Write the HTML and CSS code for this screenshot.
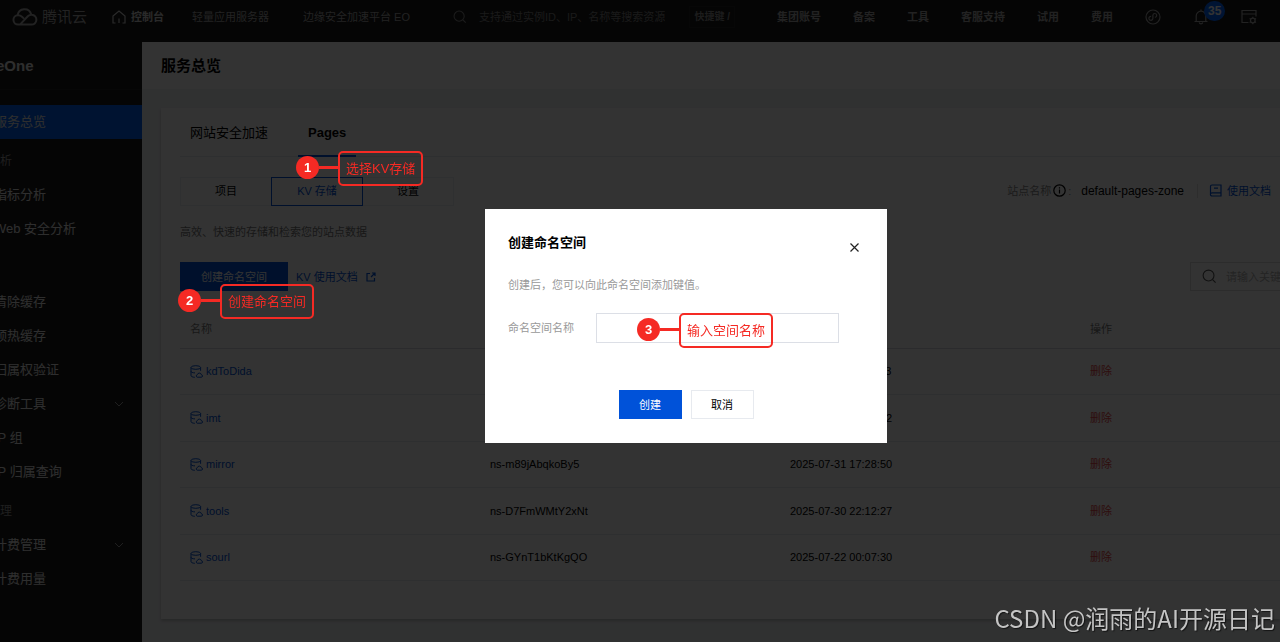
FILE: index.html
```html
<!DOCTYPE html>
<html lang="zh-CN">
<head>
    <meta charset="UTF-8">
    <meta name="viewport" content="width=device-width, initial-scale=1.0">
    <title>服务总览 - 腾讯云</title>
    <link rel="stylesheet" href="styles.css">
</head>
<body>
    <!-- shared icons -->
    <svg class="sprite" aria-hidden="true">
        <symbol id="icon-search" viewBox="0 0 16 16">
            <circle cx="7" cy="7" r="5.8"/>
            <path d="M11.3 11.3L14.5 14.5"/>
        </symbol>
        <symbol id="icon-db" viewBox="0 0 13 13">
            <ellipse cx="5.8" cy="2.5" rx="4.8" ry="1.8"/>
            <path d="M1 2.5v8c0 1 1.6 1.7 3.8 1.8M10.6 2.5v3.3M1 6.4c0 .8 1.6 1.4 4 1.5M7.2 12.2h4a1.2 1.2 0 0 0 .2-2.4 2.1 2.1 0 0 0-4.1-.1 1.3 1.3 0 0 0-.1 2.5z"/>
        </symbol>
        <symbol id="icon-arrow" viewBox="0 0 10 10">
            <path d="M1 3l4 4 4-4"/>
        </symbol>
    </svg>

    <header class="topbar">
        <a href="#" class="logo">
            <svg width="26" height="20" viewBox="0 0 26 20">
                <path d="M8 17.6h11.2a4.9 4.9 0 0 0 .6-9.8c-1.6-.1-2.9.5-4 1.5L8 17.6H6.4a4.7 4.7 0 0 1-.5-9.4c1.7-.1 3 .5 4.1 1.5l2 1.9M5.6 8.2a7 7 0 0 1 13.6-1"/>
            </svg>
            <span>腾讯云</span>
        </a>
        <a href="#" class="home">
            <svg width="14" height="14" viewBox="0 0 14 14"><path d="M3.5 13H1V6l6-5 6 5v7h-2.500M7 13V8.500"/></svg>
            控制台
        </a>
        <nav class="shortcuts">
            <a href="#">轻量应用服务器</a>
            <a href="#">边缘安全加速平台 EO</a>
        </nav>
        <div class="top-search">
            <svg width="14" height="14"><use href="#icon-search"/></svg>
            <input type="text" aria-label="搜索" placeholder="支持通过实例ID、IP、名称等搜索资源">
            <kbd>快捷键 /</kbd>
        </div>
        <nav class="top-links">
            <a href="#">集团账号</a>
            <a href="#">备案</a>
            <a href="#">工具</a>
            <a href="#">客服支持</a>
            <a href="#">试用</a>
            <a href="#">费用</a>
        </nav>
        <div class="top-icons">
            <button type="button" aria-label="小程序">
                <svg width="16" height="16" viewBox="0 0 16 16"><circle cx="8" cy="8" r="7"/><path d="M6.2 7.300a2 2 0 1 0 1.700 2V6.300a1.900 1.900 0 1 1 2 2"/></svg>
            </button>
            <button type="button" aria-label="消息" class="bell">
                <svg width="16" height="16" viewBox="0 0 16 16"><path d="M1.500 12.500h13M3.200 12.500V7a4.800 4.800 0 0 1 9.600 0v5.500M8 2.200V.6M6.200 13.500a1.900 1.900 0 0 0 3.600 0"/></svg>
                <span class="badge">35</span>
            </button>
            <button type="button" aria-label="设置">
                <svg width="16" height="16" viewBox="0 0 16 16"><path d="M7.500 13.500H1v-12h14v6M1 5h14"/><circle cx="11.800" cy="11.500" r="2.300"/><path d="M11.800 7.800v1.400M11.800 13.800v1.400M8.600 9.600l1.200.7M13.800 12.700l1.200.7M8.600 13.400l1.200-.7M13.800 10.300l1.200-.7"/></svg>
            </button>
        </div>
    </header>

    <div class="layout">
        <aside class="sidebar">
            <h2>eOne</h2>
            <ul>
                <li><a href="#" class="active">服务总览</a></li>
                <li class="group">分析</li>
                <li><a href="#">指标分析</a></li>
                <li><a href="#">Web 安全分析</a></li>
                <li class="group"></li>
                <li><a href="#">清除缓存</a></li>
                <li><a href="#">预热缓存</a></li>
                <li><a href="#">归属权验证</a></li>
                <li><a href="#">诊断工具<svg width="10" height="10"><use href="#icon-arrow"/></svg></a></li>
                <li><a href="#">IP 组</a></li>
                <li><a href="#">IP 归属查询</a></li>
                <li class="group">管理</li>
                <li><a href="#">计费管理<svg width="10" height="10"><use href="#icon-arrow"/></svg></a></li>
                <li><a href="#">计费用量</a></li>
            </ul>
        </aside>

        <main>
            <div class="page-title"><h1>服务总览</h1></div>
            <section class="card">
                <nav class="tabs">
                    <a href="#">网站安全加速</a>
                    <a href="#" class="active">Pages</a>
                </nav>

                <div class="row">
                    <div class="segment">
                        <button type="button">项目</button>
                        <button type="button" class="active">KV 存储</button>
                        <button type="button">设置</button>
                    </div>
                    <div class="zone">
                        <span class="muted">站点名称</span>
                        <svg width="13" height="13" viewBox="0 0 13 13"><circle cx="6.500" cy="6.500" r="5.700"/><path d="M6.500 5.500v4M6.500 3.200v1.200"/></svg>
                        <span class="muted">:</span>
                        <span class="zone-name">default-pages-zone</span>
                        <a href="#" class="doc">
                            <svg width="13" height="13" viewBox="0 0 13 13"><path d="M1.500 10.500V2.500a1.500 1.500 0 0 1 1.500-1.500h9v11H3a1.500 1.500 0 0 1 0-3.200h9M5 4.200h4"/></svg>
                            使用文档
                        </a>
                    </div>
                </div>

                <p class="desc">高效、快速的存储和检索您的站点数据</p>

                <div class="row">
                    <div class="actions">
                        <button type="button" class="primary">创建命名空间</button>
                        <a href="#">
                            KV 使用文档
                            <svg width="10" height="10" viewBox="0 0 10 10"><path d="M4 1.500H1v7.500h7.500V6M6 1h3v3M9 1L5 5"/></svg>
                        </a>
                    </div>
                    <div class="filter">
                        <svg width="15" height="15"><use href="#icon-search"/></svg>
                        <input type="text" aria-label="关键字" placeholder="请输入关键字">
                    </div>
                </div>

                <table>
                    <colgroup><col><col><col><col class="rest"></colgroup>
                    <thead>
                        <tr><th>名称</th><th aria-label="ID"></th><th aria-label="创建时间"></th><th>操作</th></tr>
                    </thead>
                    <tbody>
                        <tr>
                            <td><a href="#"><svg width="13" height="13"><use href="#icon-db"/></svg>kdToDida</a></td>
                            <td></td>
                            <td>2025-08-06 11:19:03</td>
                            <td><button type="button" class="delete">删除</button></td>
                        </tr>
                        <tr>
                            <td><a href="#"><svg width="13" height="13"><use href="#icon-db"/></svg>imt</a></td>
                            <td></td>
                            <td>2025-08-01 10:20:12</td>
                            <td><button type="button" class="delete">删除</button></td>
                        </tr>
                        <tr>
                            <td><a href="#"><svg width="13" height="13"><use href="#icon-db"/></svg>mirror</a></td>
                            <td>ns-m89jAbqkoBy5</td>
                            <td>2025-07-31 17:28:50</td>
                            <td><button type="button" class="delete">删除</button></td>
                        </tr>
                        <tr>
                            <td><a href="#"><svg width="13" height="13"><use href="#icon-db"/></svg>tools</a></td>
                            <td>ns-D7FmWMtY2xNt</td>
                            <td>2025-07-30 22:12:27</td>
                            <td><button type="button" class="delete">删除</button></td>
                        </tr>
                        <tr>
                            <td><a href="#"><svg width="13" height="13"><use href="#icon-db"/></svg>sourl</a></td>
                            <td>ns-GYnT1bKtKgQO</td>
                            <td>2025-07-22 00:07:30</td>
                            <td><button type="button" class="delete">删除</button></td>
                        </tr>
                    </tbody>
                </table>
            </section>
        </main>
    </div>

    <div class="mask">
        <form class="dialog" role="dialog" aria-labelledby="dialog-title">
            <div class="dialog-head">
                <h3 id="dialog-title">创建命名空间</h3>
                <button type="button" class="close" aria-label="关闭">
                    <svg width="11" height="11" viewBox="0 0 11 11"><path d="M1.500 1.500l8 8M9.500 1.500l-8 8"/></svg>
                </button>
            </div>
            <p>创建后，您可以向此命名空间添加键值。</p>
            <div class="field">
                <label for="ns-name">命名空间名称</label>
                <input type="text" id="ns-name">
            </div>
            <div class="dialog-foot">
                <button type="button" class="primary">创建</button>
                <button type="button" class="plain">取消</button>
            </div>
        </form>
    </div>

    <!-- step callouts -->
    <div class="step step-1"><b>1</b><i></i><span>选择KV存储</span></div>
    <div class="step step-2"><b>2</b><i></i><span>创建命名空间</span></div>
    <div class="step step-3"><b>3</b><i></i><span>输入空间名称</span></div>

    <div class="watermark">CSDN @润雨的AI开源日记</div>
</body>
</html>
```
FILE: styles.css
```css
* {
    box-sizing: border-box;
}
body {
    margin: 0;
    min-height: 100vh;
    display: flex;
    flex-direction: column;
    overflow: hidden;
    font-family: "Liberation Sans", "Noto Sans CJK SC", sans-serif;
    font-size: 11px;
    line-height: 20px;
    color: #000;
    background: #f0f2f5;
}
h1, h2, h3, p, ul {
    margin: 0;
    padding: 0;
}
ul {
    list-style: none;
}
a {
    color: #0052d9;
    text-decoration: none;
}
button, input, kbd {
    font: inherit;
    color: inherit;
}
button {
    padding: 0;
    border: none;
    background: none;
    cursor: pointer;
}
input {
    min-width: 0;
    padding: 0;
    border: none;
    background: none;
    outline: none;
}
svg {
    flex: none;
    fill: none;
    stroke: currentColor;
    stroke-width: 1.2;
}
.sprite {
    position: absolute;
    width: 0;
    height: 0;
}

/* top bar */
.topbar {
    display: flex;
    align-items: center;
    height: 42px;
    padding: 0 23px 8px 12px;
    background: #1a1a1a;
    color: #a8a8a8;
    white-space: nowrap;
}
.topbar a {
    color: inherit;
}
.logo, .home {
    display: flex;
    align-items: center;
}
.logo {
    gap: 4px;
    font-size: 15px;
}
.logo svg {
    stroke-width: 2;
}
.topbar .home {
    gap: 5px;
    margin-left: 25px;
    color: #d0d0d0;
    font-weight: bold;
}
.shortcuts {
    display: flex;
    gap: 34px;
    margin-left: 28px;
}
.top-search {
    flex: 1;
    display: flex;
    align-items: center;
    margin-left: 43px;
    color: #8a8a8a;
}
.top-search input {
    flex: 1;
    margin: 0 24px 0 12px;
}
.top-search input::placeholder {
    color: #808080;
    opacity: 1;
}
.top-search kbd {
    padding: 0 4px;
    border: 1px solid #262626;
    font-size: 10px;
    font-weight: bold;
}
.top-links {
    display: flex;
    gap: 32px;
    margin-left: 42px;
    font-weight: bold;
}
.top-icons {
    display: flex;
    gap: 32px;
    margin-left: 32px;
}
.top-icons button {
    display: flex;
    position: relative;
}
.badge {
    position: absolute;
    left: 11px;
    top: -8px;
    padding: 0 4px;
    border-radius: 10px;
    background: #0066ff;
    color: #fff;
    font-size: 12px;
    font-weight: bold;
}

/* sidebar */
.layout {
    flex: 1;
    display: flex;
}
.sidebar {
    flex: none;
    width: 154px;
    margin-left: -12px;
    background: #1a1a1a;
    color: #e6e6e6;
}
.sidebar h2 {
    padding: 13px 8px;
    border-bottom: 1px solid #262626;
    font-size: 15px;
    line-height: 21px;
}
.sidebar ul {
    padding-top: 15px;
}
.sidebar a {
    display: flex;
    align-items: center;
    justify-content: space-between;
    height: 34px;
    padding: 0 18px 0 6px;
    color: inherit;
    font-size: 13px;
}
.sidebar a.active {
    background: #0062f5;
}
.sidebar svg {
    color: #999;
    stroke-width: 1;
}
.group {
    height: 39px;
    padding-top: 12px;
    color: #999;
    font-size: 12px;
}

/* content */
main {
    flex: 1;
    min-width: 0;
}
.page-title {
    padding: 13px 19px;
    background: #fff;
}
.page-title h1 {
    font-size: 15px;
    line-height: 21px;
}
.card {
    margin: 19px 0 22px 19px;
    padding: 0 0 38px 19px;
    background: #fff;
    box-shadow: 0 2px 3px rgba(0, 0, 0, 0.2);
}
.tabs {
    display: flex;
    gap: 20px;
    margin-bottom: 20px;
    border-bottom: 1px solid #e7eaef;
    font-size: 13px;
}
.tabs a {
    padding: 15px 10px 12px;
    margin-bottom: -1px;
    border-bottom: 2px solid transparent;
    color: #000;
}
.tabs .active {
    border-color: #0052d9;
    font-weight: bold;
}
.row {
    display: flex;
    align-items: center;
    justify-content: space-between;
}
.segment {
    display: flex;
}
.segment button {
    width: 92px;
    height: 29px;
    margin-right: -1px;
    padding-bottom: 2px;
    border: 1px solid #eceef2;
}
.segment .active {
    position: relative;
    border-color: #0052d9;
    color: #0052d9;
}
.zone {
    display: flex;
    align-items: center;
    gap: 2px;
    padding: 0 9px 2px 0;
}
.muted, .desc {
    color: #888;
}
.zone-name {
    margin-left: 8px;
    font-size: 12px;
}
.doc {
    display: flex;
    align-items: center;
    gap: 5px;
    margin-left: 11px;
    padding-left: 11px;
    border-left: 1px solid #e0e0e0;
    line-height: 14px;
}
.desc {
    margin: 16px 0 20px;
    color: #777;
}
.actions, .actions a {
    display: flex;
    align-items: center;
    gap: 8px;
}
.primary {
    height: 29px;
    padding: 0 21px;
    background: #0052d9;
    color: #fff;
}
.filter {
    display: flex;
    align-items: center;
    gap: 9px;
    width: 90px;
    height: 29px;
    padding-left: 11px;
    border: 1px solid #dcdcdc;
    border-right: none;
    color: #555;
}
.filter input {
    flex: 1;
}
.filter input::placeholder {
    color: #b0b0b0;
    opacity: 1;
}
table {
    width: 100%;
    height: 271px;
    margin-top: 19px;
    table-layout: fixed;
    border-collapse: collapse;
}
col {
    width: 300px;
}
.rest {
    width: auto;
}
th, td {
    padding: 0 10px;
    border-bottom: 1px solid #e7eaef;
    text-align: left;
}
th {
    height: 38px;
    border-color: #d5d8de;
    color: #777;
    font-weight: normal;
}
td {
    height: 46px;
}
td a {
    display: flex;
    align-items: center;
    gap: 3px;
}
td svg {
    stroke-width: 1;
}
.delete {
    color: #e54545;
}

/* dialog */
.mask {
    position: fixed;
    inset: 0;
    display: flex;
    align-items: center;
    justify-content: center;
    padding: 10px 0 0 92px;
    background: rgba(0, 0, 0, 0.8);
}
.dialog {
    width: 402px;
    padding: 24px 23px;
    background: #fff;
}
.dialog-head {
    display: flex;
    justify-content: space-between;
}
.dialog h3 {
    font-size: 13px;
}
.close {
    padding: 8px 4px 0;
    color: #222;
    line-height: 0;
}
.dialog p {
    margin: 22px 0 18px;
    color: #999;
}
.field {
    display: flex;
    align-items: center;
    margin-right: 25px;
    color: #999;
}
.field label {
    width: 88px;
}
.field input {
    flex: 1;
    height: 30px;
    padding: 0 8px;
    border: 1px solid #dcdfe6;
    color: #000;
}
.dialog-foot {
    display: flex;
    justify-content: center;
    gap: 9px;
    margin-top: 47px;
}
.dialog-foot button {
    width: 63px;
    height: 29px;
    padding: 0;
}
.plain {
    border: 1px solid #e7eaef;
}

/* callouts */
.step {
    position: absolute;
    display: flex;
    align-items: center;
    color: #f52a24;
    font-size: 13px;
    line-height: 19px;
}
.step b {
    width: 23px;
    height: 23px;
    margin-bottom: 2px;
    border-radius: 50%;
    background: #f52a24;
    color: #fff;
    line-height: 23px;
    text-align: center;
}
.step i {
    width: 19px;
    height: 3px;
    margin-bottom: 2px;
    background: #f52a24;
}
.step span {
    padding: 6px;
    border: 2px solid #f52a24;
    border-radius: 5px;
}
.step-1 {
    left: 296px;
    top: 151px;
}
.step-2 {
    left: 178px;
    top: 284px;
}
.step-3 {
    left: 637px;
    top: 313px;
}
.watermark {
    position: absolute;
    right: 5px;
    bottom: 6px;
    color: #c4c4c4;
    font-family: "Noto Sans CJK SC", sans-serif;
    font-size: 24px;
    line-height: 36px;
    text-shadow: 1px 1px 1px rgba(0, 0, 0, 0.6);
}
```
